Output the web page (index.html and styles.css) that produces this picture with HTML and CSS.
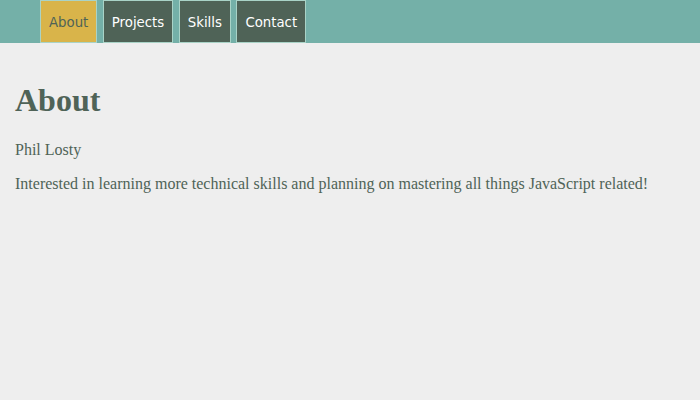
FILE: index.html
```html
<!DOCTYPE html>
<html>
<head>
<meta charset="utf-8">
<link rel="stylesheet" href="styles.css">
</head>
<body>
<nav class="nav">
  <a class="tab active" href="#">About</a>
  <a class="tab" href="#">Projects</a>
  <a class="tab" href="#">Skills</a>
  <a class="tab" href="#">Contact</a>
</nav>
<main class="content">
  <h1 class="title">About</h1>
  <p class="text">Phil Losty</p>
  <p class="text">Interested in learning more technical skills and planning on mastering all things JavaScript related!</p>
</main>
</body>
</html>
```
FILE: styles.css
```css
html, body {
  margin: 0;
  padding: 0;
  background: #eeeeee;
}
body {
  font-family: "Liberation Serif", "Times New Roman", serif;
  color: #4f6357;
}
.nav {
  display: flex;
  gap: 5.5px;
  height: 43px;
  padding-left: 40px;
  background: #74b0a8;
  box-sizing: border-box;
}
.tab {
  display: flex;
  align-items: center;
  box-sizing: border-box;
  height: 43px;
  padding: 2px 8px 0;
  border: 1px solid #a9d3c7;
  background: #4f6357;
  color: #ffffff;
  font-family: "DejaVu Sans", Verdana, sans-serif;
  font-size: 13.3px;
  text-decoration: none;
}
.tab.active {
  background: #d9b44a;
  color: #4f6357;
}
.content {
  padding: 18px 15px 0;
}
.title {
  font-size: 32px;
  font-weight: bold;
  margin: 21.44px 0;
}
.text {
  font-size: 16px;
  margin: 16px 0;
}
```
